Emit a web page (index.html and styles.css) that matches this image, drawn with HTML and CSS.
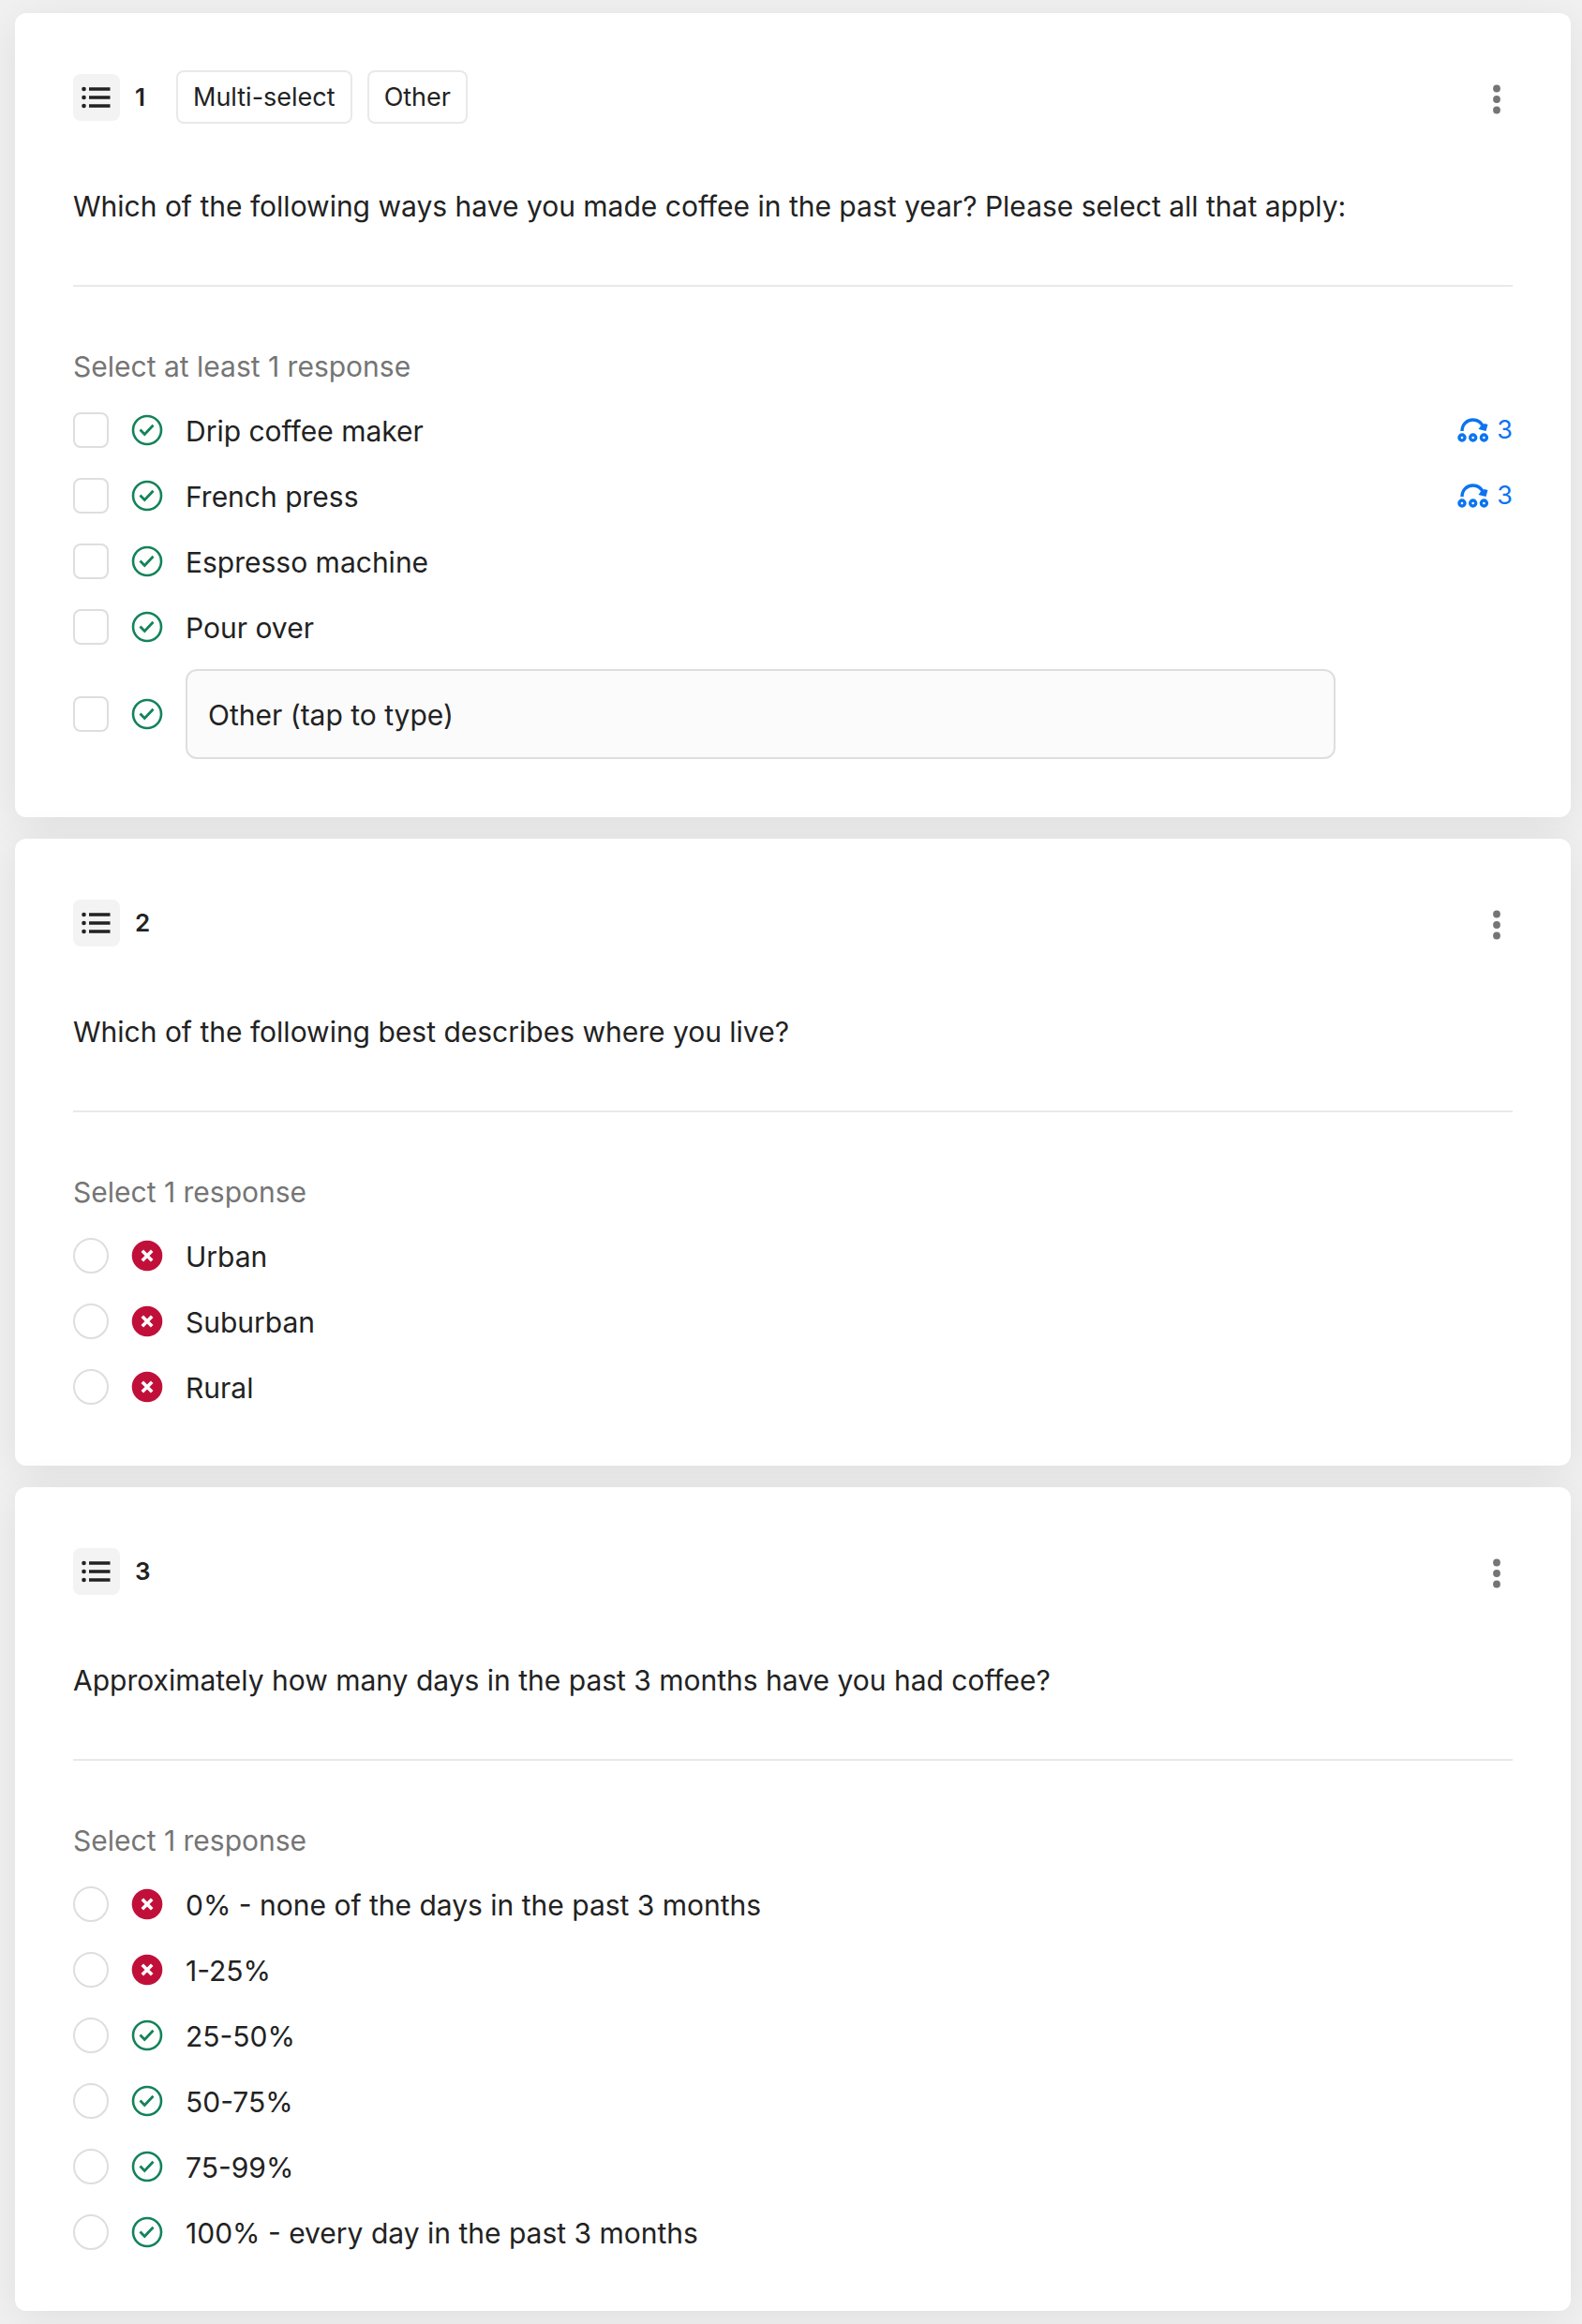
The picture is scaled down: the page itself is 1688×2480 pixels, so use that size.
FILE: index.html
```html
<!DOCTYPE html>
<html lang="en">
	<head>
		<meta charset="UTF-8">
		<title>Screener questions</title>
		<link rel="stylesheet" href="styles.css">
	</head>
	<body>
		<!-- shared icons -->
		<svg class="sprite" aria-hidden="true">
			<symbol id="icon-list" viewBox="0 0 32 24">
				<circle cx="2.500" cy="3" r="2.300"/>
				<circle cx="2.500" cy="12" r="2.300"/>
				<circle cx="2.500" cy="21" r="2.300"/>
				<path d="M8 3h22.500M8 12h22.500M8 21h22.500" stroke="currentColor" stroke-width="3.400"/>
			</symbol>
			<symbol id="icon-more" viewBox="0 0 8 32">
				<circle cx="4" cy="4.500" r="3.900"/>
				<circle cx="4" cy="16" r="3.900"/>
				<circle cx="4" cy="27.500" r="3.900"/>
			</symbol>
			<symbol id="icon-check" viewBox="0 0 34 34">
				<circle cx="17" cy="17" r="15" fill="none" stroke="currentColor" stroke-width="2.600"/>
				<path d="M9.500 16.500l4.800 5 9.200-9.800" fill="none" stroke="currentColor" stroke-width="2.800"/>
			</symbol>
			<symbol id="icon-cross" viewBox="0 0 34 34">
				<circle cx="17" cy="17" r="16.300"/>
				<path d="M11.800 11.800l10.400 10.400M22.200 11.800l-10.400 10.400" stroke="#fff" stroke-width="3.600"/>
			</symbol>
			<symbol id="icon-skip" viewBox="0 0 34 26">
				<g fill="none" stroke="currentColor" stroke-width="3.400">
					<circle cx="5" cy="21" r="3"/>
					<circle cx="16.700" cy="21" r="3"/>
					<circle cx="28.400" cy="21" r="3"/>
					<path d="M5 14C5 6.500 10.500 2 16.500 2c5.500 0 9.500 3.500 11.500 8"/>
				</g>
				<path d="M22.500 12l2.500-3.500 4-2.500 3.500 1-2 7z"/>
			</symbol>
		</svg>

		<form class="questions" action="" method="post">
			<section class="card">
				<div class="card-header">
					<span class="type-icon"><svg width="32" height="24"><use href="#icon-list"/></svg></span>
					<span class="number">1</span>
					<span class="tag">Multi-select</span>
					<span class="tag">Other</span>
					<button type="button" class="more" aria-label="Question 1 options"><svg width="8" height="32"><use href="#icon-more"/></svg></button>
				</div>
				<h2 class="question">Which of the following ways have you made coffee in the past year? Please select all that apply:</h2>
				<p class="help">Select at least 1 response</p>
				<ul class="options">
					<li class="option">
						<input type="checkbox" id="q1a" name="q1">
						<svg class="status accept"><use href="#icon-check"/></svg>
						<label for="q1a">Drip coffee maker</label>
						<a href="#" class="skip"><svg width="34" height="26"><use href="#icon-skip"/></svg>3</a>
					</li>
					<li class="option">
						<input type="checkbox" id="q1b" name="q1">
						<svg class="status accept"><use href="#icon-check"/></svg>
						<label for="q1b">French press</label>
						<a href="#" class="skip"><svg width="34" height="26"><use href="#icon-skip"/></svg>3</a>
					</li>
					<li class="option">
						<input type="checkbox" id="q1c" name="q1">
						<svg class="status accept"><use href="#icon-check"/></svg>
						<label for="q1c">Espresso machine</label>
					</li>
					<li class="option">
						<input type="checkbox" id="q1d" name="q1">
						<svg class="status accept"><use href="#icon-check"/></svg>
						<label for="q1d">Pour over</label>
					</li>
					<li class="option other">
						<input type="checkbox" id="q1e" name="q1" aria-label="Other">
						<svg class="status accept"><use href="#icon-check"/></svg>
						<input type="text" name="q1other" placeholder="Other (tap to type)" aria-label="Other">
					</li>
				</ul>
			</section>

			<section class="card">
				<div class="card-header">
					<span class="type-icon"><svg width="32" height="24"><use href="#icon-list"/></svg></span>
					<span class="number">2</span>
					<button type="button" class="more" aria-label="Question 2 options"><svg width="8" height="32"><use href="#icon-more"/></svg></button>
				</div>
				<h2 class="question">Which of the following best describes where you live?</h2>
				<p class="help">Select 1 response</p>
				<ul class="options">
					<li class="option">
						<input type="radio" id="q2a" name="q2">
						<svg class="status reject"><use href="#icon-cross"/></svg>
						<label for="q2a">Urban</label>
					</li>
					<li class="option">
						<input type="radio" id="q2b" name="q2">
						<svg class="status reject"><use href="#icon-cross"/></svg>
						<label for="q2b">Suburban</label>
					</li>
					<li class="option">
						<input type="radio" id="q2c" name="q2">
						<svg class="status reject"><use href="#icon-cross"/></svg>
						<label for="q2c">Rural</label>
					</li>
				</ul>
			</section>

			<section class="card">
				<div class="card-header">
					<span class="type-icon"><svg width="32" height="24"><use href="#icon-list"/></svg></span>
					<span class="number">3</span>
					<button type="button" class="more" aria-label="Question 3 options"><svg width="8" height="32"><use href="#icon-more"/></svg></button>
				</div>
				<h2 class="question">Approximately how many days in the past 3 months have you had coffee?</h2>
				<p class="help">Select 1 response</p>
				<ul class="options">
					<li class="option">
						<input type="radio" id="q3a" name="q3">
						<svg class="status reject"><use href="#icon-cross"/></svg>
						<label for="q3a">0% - none of the days in the past 3 months</label>
					</li>
					<li class="option">
						<input type="radio" id="q3b" name="q3">
						<svg class="status reject"><use href="#icon-cross"/></svg>
						<label for="q3b">1-25%</label>
					</li>
					<li class="option">
						<input type="radio" id="q3c" name="q3">
						<svg class="status accept"><use href="#icon-check"/></svg>
						<label for="q3c">25-50%</label>
					</li>
					<li class="option">
						<input type="radio" id="q3d" name="q3">
						<svg class="status accept"><use href="#icon-check"/></svg>
						<label for="q3d">50-75%</label>
					</li>
					<li class="option">
						<input type="radio" id="q3e" name="q3">
						<svg class="status accept"><use href="#icon-check"/></svg>
						<label for="q3e">75-99%</label>
					</li>
					<li class="option">
						<input type="radio" id="q3f" name="q3">
						<svg class="status accept"><use href="#icon-check"/></svg>
						<label for="q3f">100% - every day in the past 3 months</label>
					</li>
				</ul>
			</section>
		</form>
	</body>
</html>
```

FILE: styles.css
```css
* {
	margin: 0;
	padding: 0;
	box-sizing: border-box;
}
body {
	background-color: #f1f1f1;
	color: #222;
	font-family: Inter, "Liberation Sans", sans-serif;
	font-size: 30px;
	line-height: 40px;
}
svg {
	display: block;
	flex-shrink: 0;
	fill: currentColor;
}
.sprite {
	position: absolute;
	width: 0;
	height: 0;
}
.questions {
	display: flex;
	flex-direction: column;
	gap: 23px;
	padding: 14px 12px 14px 16px;
}
.card {
	padding: 61px 62px 49px;
	background-color: #fff;
	border-radius: 12px;
	box-shadow: 0 8px 48px rgba(0, 0, 0, 0.08);
}

/* header */
.card-header {
	display: flex;
	align-items: center;
	gap: 16px;
	height: 57px;
	font-size: 27px;
}
.type-icon {
	display: flex;
	align-items: center;
	justify-content: center;
	width: 50px;
	height: 50px;
	background-color: #f3f3f3;
	border-radius: 8px;
}
.number {
	min-width: 28px;
	font-size: 26px;
	font-weight: 600;
}
.tag {
	height: 57px;
	padding: 0 16px;
	border: 2px solid #e9e9e9;
	border-radius: 8px;
	line-height: 53px;
}
.more {
	display: flex;
	align-items: center;
	justify-content: center;
	width: 34px;
	height: 50px;
	margin-left: auto;
	padding-top: 4px;
	border: none;
	background: none;
	color: #757575;
	cursor: pointer;
}

.question {
	padding: 68px 0 64px;
	border-bottom: 2px solid #e9e9e9;
	font-size: 30px;
	font-weight: 400;
}
.help {
	padding: 65px 0 13px;
	color: #757575;
}

/* answers */
.options {
	list-style: none;
}
.option {
	display: flex;
	align-items: center;
	min-height: 70px;
}
.option input[type="checkbox"],
.option input[type="radio"] {
	appearance: none;
	flex-shrink: 0;
	width: 38px;
	height: 38px;
	border: 2px solid #dedede;
	border-radius: 8px;
	background-color: #fff;
}
.option input[type="radio"] {
	border-radius: 50%;
}
.option label {
	flex: 1;
	padding-top: 2px;
}
.status {
	width: 34px;
	height: 34px;
	margin: 0 24px;
}
.accept {
	color: #13835a;
}
.reject {
	color: #c0103a;
}
.skip {
	display: flex;
	align-items: center;
	gap: 8px;
	color: #0b74f1;
	font-size: 27px;
	text-decoration: none;
}
.other {
	padding: 10px 0 13px;
}
.option input[type="text"] {
	flex: 1;
	height: 96px;
	margin-right: 189px;
	padding: 2px 22px 0;
	border: 2px solid #dedede;
	border-radius: 12px;
	background-color: #fbfbfb;
	color: #222;
	font: inherit;
}
.option input[type="text"]::placeholder {
	color: #222;
}
```
